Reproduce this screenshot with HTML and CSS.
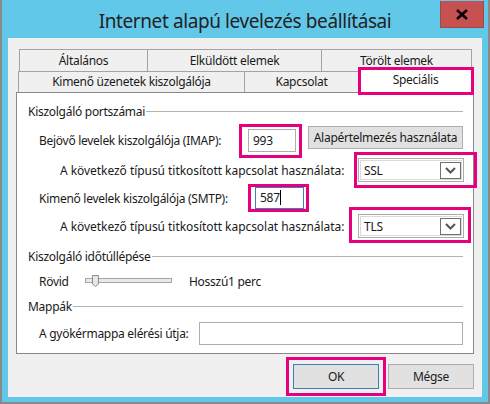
FILE: index.html
```html
<!DOCTYPE html>
<html lang="hu">
<head>
    <meta charset="UTF-8">
    <meta name="viewport" content="width=device-width, initial-scale=1.0">
    <title>Internet alapú levelezés beállításai</title>
    <link rel="stylesheet" href="styles.css">
</head>
<body>
    <div class="window">
        <div class="titlebar">
            <div class="title">Internet alapú levelezés beállításai</div>
            <div class="close">
                <svg width="14" height="11" viewBox="0 0 14 11">
                    <path d="M2 1 L12 10 M12 1 L2 10" stroke="#000" stroke-width="2.6" fill="none"/>
                </svg>
            </div>
        </div>
        <div class="client">
            <div class="tabs">
                <div class="tab-row row1">
                    <div class="tab w128">Általános</div>
                    <div class="tab w174">Elküldött elemek</div>
                    <div class="tab w151">Törölt elemek</div>
                </div>
                <div class="tab-row row2">
                    <div class="tab w226">Kimenő üzenetek kiszolgálója</div>
                    <div class="tab w114">Kapcsolat</div>
                    <div class="tab w114 active hl hl-tab">Speciális</div>
                </div>
            </div>
            <div class="panel">
                <div class="group-title">Kiszolgáló portszámai</div>
                <div class="row r-imap">
                    <div class="label lv1 w209">Bejövő levelek kiszolgálója (IMAP):</div>
                    <div class="hl hl-imap"><div class="textbox port">993</div></div>
                    <div class="button default-btn">Alapértelmezés használata</div>
                </div>
                <div class="row r-enc">
                    <div class="label lv2 w298">A következő típusú titkosított kapcsolat használata:</div>
                    <div class="hl hl-ssl">
                        <div class="select"><span>SSL</span><span class="arrow"><svg width="11" height="7" viewBox="0 0 11 7"><path d="M1 1 L5.5 5.5 L10 1" stroke="#555" stroke-width="2" fill="none"/></svg></span></div>
                    </div>
                </div>
                <div class="row r-smtp">
                    <div class="label lv1 w216">Kimenő levelek kiszolgálója (SMTP):</div>
                    <div class="hl hl-smtp"><div class="textbox port focus">587<span class="caret"></span></div></div>
                </div>
                <div class="row r-enc">
                    <div class="label lv2 w298">A következő típusú titkosított kapcsolat használata:</div>
                    <div class="hl hl-tls">
                        <div class="select"><span>TLS</span><span class="arrow"><svg width="11" height="7" viewBox="0 0 11 7"><path d="M1 1 L5.5 5.5 L10 1" stroke="#555" stroke-width="2" fill="none"/></svg></span></div>
                    </div>
                </div>
                <div class="group-title g2">Kiszolgáló időtúllépése</div>
                <div class="row r-slider">
                    <div class="label lv1 w46">Rövid</div>
                    <div class="track">
                        <svg class="thumb" width="7" height="12" viewBox="0 0 7 12"><path d="M0.5 0.5 H6.5 V9 L3.5 11.5 L0.5 9 Z" fill="#e6e6e6" stroke="#8c8c8c"/></svg>
                    </div>
                    <div class="label slider-end">Hosszú1 perc</div>
                </div>
                <div class="group-title g3">Mappák</div>
                <div class="row r-path">
                    <div class="label lv1 w160">A gyökérmappa elérési útja:</div>
                    <div class="textbox path"></div>
                </div>
            </div>
            <div class="buttons">
                <div class="hl hl-ok"><div class="button dlg-btn ok">OK</div></div>
                <div class="button dlg-btn">Mégse</div>
            </div>
        </div>
    </div>
</body>
</html>
```
FILE: styles.css
```css
html, body {
    margin: 0;
    padding: 0;
}
body {
    font-family: "Noto Sans", "Open Sans", sans-serif;
    font-size: 12px;
    letter-spacing: -0.28px;
    color: #1a1a1a;
}
.window {
    width: 490px;
    height: 404px;
    box-sizing: border-box;
    background: #62c8ea;
    border: 2px solid #8a8a8a;
    border-top: none;
    padding: 0 6px 5px;
}
.titlebar {
    height: 38px;
    display: grid;
    grid-template-columns: 1fr auto 1fr;
}
.title {
    grid-column: 2;
    font-size: 19px;
    letter-spacing: -0.4px;
    line-height: 42px;
    color: #222;
    white-space: nowrap;
}
.close {
    grid-column: 3;
    justify-self: end;
    width: 44px;
    height: 27px;
    margin-top: 1px;
    margin-right: -2px;
    background: #c75050;
    border: 1px solid #9b4a4a;
    border-top: none;
    box-sizing: border-box;
    display: flex;
    align-items: center;
    justify-content: center;
}
.client {
    height: 359px;
    background: #f0f0f0;
    padding: 11px 8px 0;
    box-sizing: border-box;
}
.tabs {
    padding-left: 2px;
}
.tab-row {
    display: flex;
    height: 21px;
}
.row1 {
    padding-left: 1px;
    height: 22px;
}
.tab {
    box-sizing: border-box;
    border: 1px solid #a3a3a3;
    border-bottom: none;
    margin-right: -1px;
    background: #f0f0f0;
    text-align: center;
    line-height: 21px;
    white-space: nowrap;
}
.row1 .tab { height: 22px; }
.row2 .tab { height: 21px; line-height: 19px; }
.tab.active {
    background: #fff;
    height: 25px;
    margin-top: -4px;
    margin-bottom: -1px;
    line-height: 24px;
    z-index: 1;
}
.w128 { width: 129px; }
.w174 { width: 175px; }
.w151 { width: 151px; }
.w226 { width: 227px; }
.w114 { width: 115px; }
.panel {
    height: 262px;
    box-sizing: border-box;
    background: #fff;
    border: 1px solid #898989;
    padding: 10px 10px 0 11px;
}
.group-title {
    display: flex;
    align-items: center;
    height: 16px;
    white-space: nowrap;
}
.group-title::after {
    content: "";
    flex: 1;
    border-top: 1px solid #b4b4b4;
    margin-left: 1px;
}
.g2 { margin-top: 8px; }
.g3 { margin-top: 7px; }
.row {
    display: flex;
    align-items: center;
}
.label {
    white-space: nowrap;
    flex-shrink: 0;
}
.lv1 { margin-left: 11px; }
.lv2 { margin-left: 32px; letter-spacing: -0.05px; }
.w209 { width: 209px; }
.w216 { width: 216px; }
.w298 { width: 298px; }
.w46 { width: 46px; }
.w160 { width: 160px; }
.r-imap { margin-top: 7px; height: 28px; }
.r-enc { margin-top: 2px; height: 28px; }
.r-smtp { margin-top: 2px; height: 24px; }
.r-slider { margin-top: 7px; height: 20px; }
.r-path { margin-top: 7px; height: 25px; }
.textbox {
    box-sizing: border-box;
    border: 1px solid #abadb3;
    background: #fff;
    padding-left: 4px;
    line-height: 21px;
}
.port {
    width: 48px;
    height: 23px;
}
.focus {
    width: 49px;
    height: 22px;
    line-height: 20px;
    border-color: #3c7fb1;
}
.caret {
    display: inline-block;
    width: 1px;
    height: 15px;
    background: #000;
    vertical-align: -3px;
}
.path {
    width: 264px;
    height: 23px;
}
.button {
    box-sizing: border-box;
    background: #e1e1e1;
    border: 1px solid #adadad;
    text-align: center;
    white-space: nowrap;
}
.default-btn {
    align-self: flex-start;
    margin-left: 12px;
    width: 159px;
    height: 23px;
    line-height: 21px;
}
.select {
    box-sizing: border-box;
    width: 106px;
    height: 24px;
    border: 1px solid #acacac;
    box-shadow: inset 0 0 0 1px #fff, inset 0 0 0 2px #dadada;
    display: flex;
    align-items: center;
    justify-content: space-between;
    padding: 0 2px 0 5px;
}
.arrow {
    box-sizing: border-box;
    width: 21px;
    height: 17px;
    border: 1px solid #707070;
    display: flex;
    align-items: center;
    justify-content: center;
}
.track {
    position: relative;
    box-sizing: border-box;
    width: 87px;
    height: 5px;
    background: #e7eae8;
    border: 1px solid #a6a6a6;
    margin-top: -2px;
}
.thumb {
    position: absolute;
    left: 6px;
    top: -4px;
}
.slider-end {
    margin-left: 17px;
}
.buttons {
    display: flex;
    justify-content: flex-end;
    gap: 9px;
    margin-top: 10px;
}
.dlg-btn {
    width: 86px;
    height: 25px;
    line-height: 23px;
}
.ok {
    border-color: #3c7fb1;
}
.hl {
    position: relative;
}
.hl::after {
    content: "";
    position: absolute;
    border: 3px solid #e6007e;
    pointer-events: none;
}
.hl-tab::after { left: -1px; right: -2px; top: -1px; bottom: -3px; }
.hl-imap::after { left: -9px; right: -6px; top: -5px; bottom: -6px; }
.hl-ssl::after { left: -4px; right: -13px; top: -6px; bottom: -6px; }
.hl-smtp::after { left: -7px; right: -5px; top: -3px; bottom: -3px; }
.hl-tls::after { left: -9px; right: -7px; top: -7px; bottom: -5px; }
.hl-ok::after { left: -7px; right: -7px; top: -7px; bottom: -7px; }
```
